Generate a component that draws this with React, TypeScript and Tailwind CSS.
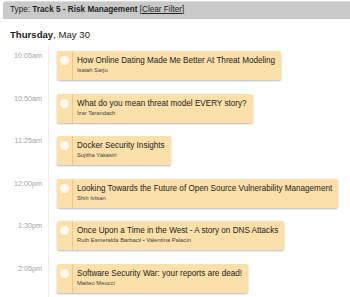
const sessions = [
  { time: "10:05am", title: "How Online Dating Made Me Better At Threat Modeling", speakers: "Isaiah Sarju" },
  { time: "10:50am", title: "What do you mean threat model EVERY story?", speakers: "Izar Tarandach" },
  { time: "11:25am", title: "Docker Security Insights", speakers: "Sujitha Yakasiri" },
  { time: "12:00pm", title: "Looking Towards the Future of Open Source Vulnerability Management", speakers: "Shiri Ivtsan" },
  { time: "1:30pm", title: "Once Upon a Time in the West - A story on DNS Attacks", speakers: "Ruth Esmeralda Barbacil • Valentina Palacín" },
  { time: "2:05pm", title: "Software Security War: your reports are dead!", speakers: "Matteo Meucci" },
];

export default function App() {
  return (
    <div className="w-[350px] h-[297px] overflow-hidden bg-white pt-px pl-[3px] font-['Liberation_Sans',Arial,sans-serif] text-[#333]">
      <div className="h-[18px] bg-[#c9c9c9] rounded-tl-[3px] border-t border-[#dcdcdc] pl-[7px] flex items-center text-[8.2px] text-[#222] whitespace-nowrap">
        <span>Type:&nbsp;</span>
        <span className="font-bold">Track 5 - Risk Management</span>
        <span>&nbsp;[<span className="underline">Clear Filter</span>]</span>
      </div>

      <div className="mt-[8px] pl-[7px] h-[15px] text-[9.6px] leading-[15px] text-[#222]">
        <span className="font-bold">Thursday</span>, May 30
      </div>

      <div className="mt-[4px]">
        {sessions.map((s) => (
          <div key={s.time} className="flex">
            <div className="w-[46px] shrink-0 border-r border-[#ececec] pr-[6px] pt-[5px] text-right text-[7.2px] leading-[10px] text-[#a3a3a3]">
              {s.time}
            </div>
            <div className="pl-[8px] pt-[5px] pb-[8.6px]">
              <div className="flex h-[29px] rounded-[2px] bg-[#fce0a9] shadow-[0_1px_2px_rgba(0,0,0,0.28)] whitespace-nowrap">
                <div className="w-[16px] shrink-0 border-r border-[#e6c98e] flex justify-center pt-[5px]">
                  <div className="w-[9px] h-[9px] rounded-full bg-[#fff9ef]" />
                </div>
                <div className="pl-[4px] pr-[6px] pt-[4px]">
                  <div className="text-[8.15px] leading-[11px] text-[#222]">{s.title}</div>
                  <div className="text-[5.8px] leading-[9px] text-[#444]">{s.speakers}</div>
                </div>
              </div>
            </div>
          </div>
        ))}
      </div>
    </div>
  );
}
